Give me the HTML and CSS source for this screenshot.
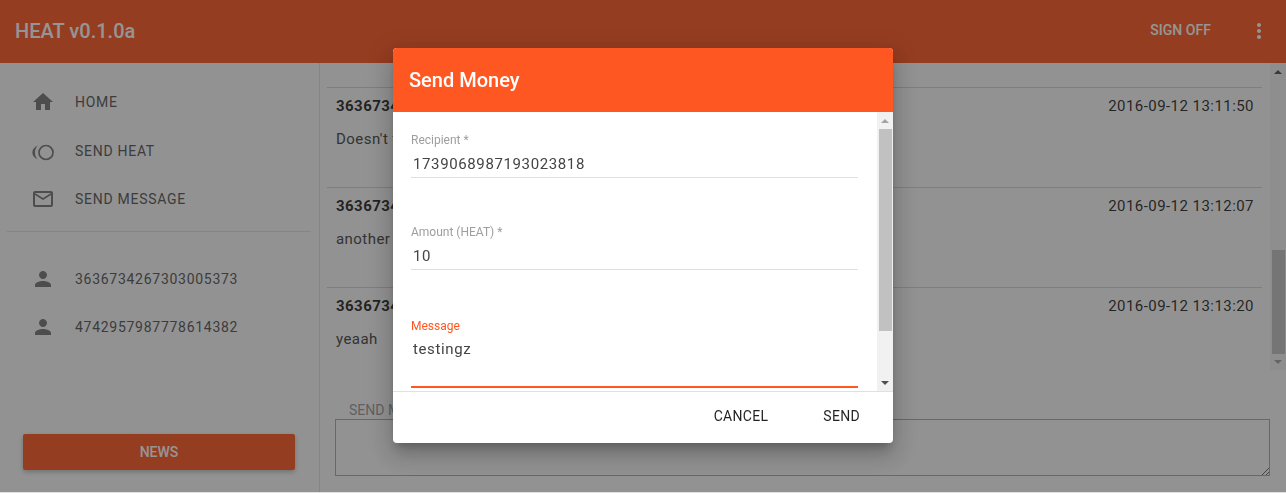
FILE: index.html
```html
<!DOCTYPE html>
<html>
<head>
    <title>HEAT v0.1.0a</title>
    <link rel="stylesheet" href="styles.css">
</head>
<body>
    <div class="app">
        <header class="topbar">
            <div class="brand">HEAT v0.1.0a</div>
            <div class="top-actions">
                <span class="sign-off">SIGN OFF</span>
                <svg class="more" viewBox="0 0 24 24"><path d="M12 8c1.100 0 2-.9 2-2s-.9-2-2-2-2 .9-2 2 .9 2 2 2zm0 2c-1.100 0-2 .9-2 2s.9 2 2 2 2-.9 2-2-.9-2-2-2zm0 6c-1.100 0-2 .9-2 2s.9 2 2 2 2-.9 2-2-.9-2-2-2z"/></svg>
            </div>
        </header>

        <div class="main">
            <aside class="sidebar">
                <nav class="nav">
                    <div class="nav-item">
                        <svg class="icon" viewBox="0 0 24 24"><path d="M10 20v-6h4v6h5v-8h3L12 3 2 12h3v8z"/></svg>
                        <span>HOME</span>
                    </div>
                    <div class="nav-item">
                        <svg class="icon" viewBox="0 0 24 24"><circle class="ring" cx="15" cy="13.500" r="7"/><path d="M7 6.500C-.5 9-.5 18 7 20.500 3 17.500 3 9.500 7 6.500z"/></svg>
                        <span>SEND HEAT</span>
                    </div>
                    <div class="nav-item">
                        <svg class="icon" viewBox="0 0 24 24"><path d="M20 4H4c-1.100 0-1.990.9-1.990 2L2 18c0 1.100.9 2 2 2h16c1.100 0 2-.9 2-2V6c0-1.100-.9-2-2-2zm0 14H4V8l8 5 8-5v10zm-8-7L4 6h16l-8 5z"/></svg>
                        <span>SEND MESSAGE</span>
                    </div>
                </nav>
                <div class="side-divider"></div>
                <nav class="nav">
                    <div class="nav-item">
                        <svg class="icon" viewBox="0 0 24 24"><path d="M12 12c2.210 0 4-1.790 4-4s-1.790-4-4-4-4 1.790-4 4 1.790 4 4 4zm0 2c-2.670 0-8 1.340-8 4v2h16v-2c0-2.660-5.330-4-8-4z"/></svg>
                        <span>3636734267303005373</span>
                    </div>
                    <div class="nav-item">
                        <svg class="icon" viewBox="0 0 24 24"><path d="M12 12c2.210 0 4-1.790 4-4s-1.790-4-4-4-4 1.790-4 4 1.790 4 4 4zm0 2c-2.670 0-8 1.340-8 4v2h16v-2c0-2.660-5.330-4-8-4z"/></svg>
                        <span>4742957987778614382</span>
                    </div>
                </nav>
                <button class="news-btn">NEWS</button>
            </aside>

            <section class="content">
                <div class="messages-wrap">
                    <div class="messages">
                        <div class="message">
                            <div class="msg-head"><strong>3636734267303005373</strong><span>2016-09-12 13:11:50</span></div>
                            <div class="msg-text">Doesn't that work?</div>
                        </div>
                        <div class="message">
                            <div class="msg-head"><strong>3636734267303005373</strong><span>2016-09-12 13:12:07</span></div>
                            <div class="msg-text">another one</div>
                        </div>
                        <div class="message">
                            <div class="msg-head"><strong>3636734267303005373</strong><span>2016-09-12 13:13:20</span></div>
                            <div class="msg-text">yeaah</div>
                        </div>
                    </div>
                    <div class="scrollbar page-scroll">
                        <div class="arrow up"></div>
                        <div class="track"><div class="thumb"></div></div>
                        <div class="arrow down"></div>
                    </div>
                </div>
                <div class="composer">
                    <label class="composer-label">SEND MESSAGE</label>
                    <div class="composer-box">
                        <svg class="grip" viewBox="0 0 8 8"><path d="M1 8L8 1M5 8L8 5"/></svg>
                    </div>
                </div>
            </section>
        </div>
    </div>

    <div class="scrim"></div>

    <div class="dialog">
        <div class="dialog-title">Send Money</div>
        <div class="dialog-body">
            <form class="dialog-form">
                <div class="field">
                    <label>Recipient *</label>
                    <div class="value">1739068987193023818</div>
                </div>
                <div class="field">
                    <label>Amount (HEAT) *</label>
                    <div class="value">10</div>
                </div>
                <div class="field field-focus">
                    <label>Message</label>
                    <div class="value value-tall">testingz</div>
                </div>
            </form>
            <div class="scrollbar dialog-scroll">
                <div class="arrow up"></div>
                <div class="track"><div class="thumb"></div></div>
                <div class="arrow down"></div>
            </div>
        </div>
        <div class="dialog-actions">
            <button>CANCEL</button>
            <button>SEND</button>
        </div>
    </div>
</body>
</html>
```

FILE: styles.css
```css
html, body { margin: 0; height: 493px; overflow: hidden; background: #e0e0e0; }
body { font-family: Roboto, Arial, sans-serif; font-size: 14px; color: rgba(0,0,0,.87); letter-spacing: .4px; }
button { font-family: inherit; letter-spacing: inherit; border: none; background: none; cursor: pointer; }

.app { height: 492px; display: flex; flex-direction: column; background: #fafafa; }
.topbar { height: 63px; flex: none; display: flex; align-items: center; justify-content: space-between; background: #ff5722; color: white; }
.brand { font-size: 20px; font-weight: 500; padding: 0 0 2px 15px; letter-spacing: .02px; }
.top-actions { display: flex; align-items: center; padding: 0 15px 1px 0; }
.sign-off { font-size: 14px; font-weight: 500; margin: 0 36px 3px 0; letter-spacing: .05px; }
.more { width: 24px; height: 24px; fill: white; }

.main { flex: 1; display: flex; min-height: 0; }
.sidebar { width: 319px; flex: none; display: flex; flex-direction: column; border-right: 1px solid #e0e0e0; padding-top: 15px; }
.nav-item { height: 48.5px; display: flex; align-items: center; padding-left: 31px; gap: 20px; color: #555; letter-spacing: .72px; }
.icon { width: 24px; height: 24px; fill: #757575; }
.ring { fill: none; stroke: #757575; stroke-width: 1.7; }
.side-divider { height: 1px; background: #e0e0e0; margin: 7px 8px 23px 7px; }
.news-btn { margin: auto 24px 22px 23px; height: 36px; background: #ff5722; color: white; font-size: 14px; font-weight: 500; border-radius: 2px; letter-spacing: 0; box-shadow: 0 2px 5px rgba(0,0,0,.26); }

.content { flex: 1; min-width: 0; display: flex; flex-direction: column; }
.messages-wrap { display: flex; height: 307px; flex: none; }
.messages { flex: 1; padding: 24px 8px 0 7px; }
.message { height: 100px; border-top: 1px solid #d4d4d4; box-sizing: border-box; padding: 0 8px 0 9px; font-size: 15px; letter-spacing: .45px; }
.msg-head { display: flex; justify-content: space-between; padding-top: 9px; line-height: 18px; }
.msg-text { margin-top: 15px; line-height: 18px; color: #444; }

.scrollbar { width: 16px; flex: none; display: flex; flex-direction: column; background: #f1f1f1; }
.track { flex: 1; position: relative; }
.arrow { height: 17px; flex: none; display: flex; align-items: center; justify-content: center; }
.arrow::after { content: ""; border-left: 4px solid transparent; border-right: 4px solid transparent; }
.arrow.up::after { border-bottom: 4px solid #505050; }
.arrow.down::after { border-top: 4px solid #505050; }
.page-scroll .arrow.down::after, .dialog-scroll .arrow.up::after { border-top-color: #a3a3a3; border-bottom-color: #a3a3a3; }
.thumb { position: absolute; left: 2px; right: 1px; background: #c1c1c1; }
.page-scroll .thumb { top: 170px; height: 104px; }
.dialog-scroll .thumb { top: 0; height: 202px; }

.composer { flex: 1; padding: 31px 16px 0 15px; }
.composer-label { display: block; padding-left: 14px; font-size: 14px; color: #9a9a9a; line-height: 18px; letter-spacing: 0; }
.composer-box { height: 55px; border: 1px solid #a9a9a9; background: #fafafa; position: relative; }
.grip { position: absolute; right: 0; bottom: 0; width: 8px; height: 8px; fill: none; stroke: #666; stroke-width: 1; }

.scrim { position: fixed; left: 0; top: 0; right: 0; bottom: 1px; background: rgba(33,33,33,.48); }

.dialog { position: fixed; left: 393px; top: 48px; width: 500px; height: 395px; display: flex; flex-direction: column; background: white; border-radius: 4px; overflow: hidden; box-shadow: 0 7px 8px -4px rgba(0,0,0,.2), 0 13px 19px 2px rgba(0,0,0,.14), 0 5px 24px 4px rgba(0,0,0,.12); }
.dialog-title { height: 64px; flex: none; display: flex; align-items: center; padding-left: 16px; background: #ff5722; color: white; font-size: 20px; font-weight: 500; letter-spacing: 0; }
.dialog-body { flex: none; height: 279px; display: flex; }
.dialog-form { flex: 1; padding: 0 19px 0 18px; }
.field { height: 92px; }
.field label { display: block; font-size: 12px; color: #9e9e9e; line-height: 14px; padding-top: 21px; letter-spacing: 0; }
.value { font-size: 15px; line-height: 20px; color: #444; padding: 7px 2px 3px; border-bottom: 1px solid #e0e0e0; letter-spacing: .62px; }
.field-focus label { color: #ff5722; padding-top: 23px; }
.value-tall { height: 47px; padding: 6px 2px 0; border-bottom: 2px solid #ff5722; }
.dialog-actions { flex: 1; border-top: 1px solid #e0e0e0; display: flex; align-items: center; justify-content: flex-end; gap: 39px; padding: 0 25px 4px 0; }
.dialog-actions button { height: 36px; padding: 0 8px; font-size: 14px; color: rgba(0,0,0,.87); font-weight: 400; letter-spacing: .3px; }
```
